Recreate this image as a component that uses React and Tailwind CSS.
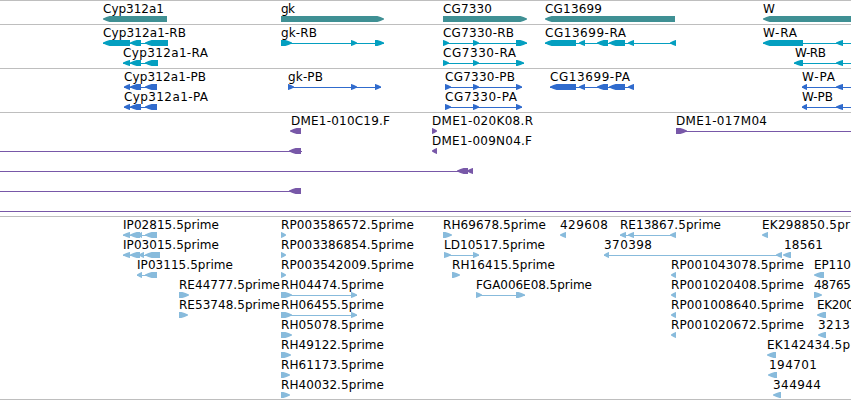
import { Fragment } from "react";

const WIDTH = 851;
const ROW_HEIGHT = 20;
const TIP = 7;

// label: [text, x, width], parts: [start, end], line: [start, end]
const tracks = [
  {
    name: "Genes",
    color: "#3f9094",
    size: "h-6",
    height: 23,
    features: [
      { row: 0, dir: "L", label: ["Cyp312a1", 103, 61], parts: [[103, 167]] },
      { row: 0, dir: "R", label: ["gk", 281, 14], parts: [[281, 384]] },
      { row: 0, dir: "R", label: ["CG7330", 443, 49], parts: [[443, 527]] },
      { row: 0, dir: "L", label: ["CG13699", 545, 57], parts: [[545, 675]] },
      { row: 0, dir: "L", label: ["W", 763, 11], parts: [[763, 860]] },
    ],
  },
  {
    name: "Transcripts",
    color: "#049fc0",
    size: "h-11",
    height: 43,
    features: [
      { row: 0, dir: "L", label: ["Cyp312a1-RB", 103, 83], parts: [[103, 130], [130, 141], [145, 168]] },
      { row: 1, dir: "L", label: ["Cyp312a1-RA", 123, 85], parts: [[123, 130], [130, 141], [145, 158]] },
      { row: 0, dir: "R", label: ["gk-RB", 281, 36], parts: [[281, 292], [351, 357], [375, 384]] },
      { row: 0, dir: "R", label: ["CG7330-RB", 443, 71], parts: [[443, 449], [473, 479], [516, 527]] },
      { row: 1, dir: "R", label: ["CG7330-RA", 443, 73], parts: [[443, 449], [473, 479], [516, 524]] },
      {
        row: 0,
        dir: "L",
        label: ["CG13699-RA", 545, 81],
        parts: [[545, 576], [579, 585], [597, 608], [609, 625], [628, 634], [670, 676]],
      },
      { row: 0, dir: "L", label: ["W-RA", 763, 34], parts: [[763, 803], [836, 843]], line: [763, 851] },
      { row: 1, dir: "L", label: ["W-RB", 795, 31], parts: [[794, 803], [836, 843]], line: [794, 851] },
    ],
  },
  {
    name: "Proteins",
    color: "#306bcd",
    size: "h-11",
    height: 43,
    features: [
      { row: 0, dir: "L", label: ["Cyp312a1-PB", 124, 82], parts: [[124, 130], [130, 141], [145, 157]] },
      { row: 1, dir: "L", label: ["Cyp312a1-PA", 124, 84], parts: [[124, 130], [130, 141], [145, 157]] },
      { row: 0, dir: "R", label: ["gk-PB", 288, 35], parts: [[288, 294], [351, 357], [375, 381]] },
      { row: 0, dir: "R", label: ["CG7330-PB", 445, 70], parts: [[445, 451], [473, 479], [516, 522]] },
      { row: 1, dir: "R", label: ["CG7330-PA", 445, 72], parts: [[445, 451], [473, 479], [516, 522]] },
      {
        row: 0,
        dir: "L",
        label: ["CG13699-PA", 550, 80],
        parts: [[550, 576], [579, 585], [597, 608], [609, 625], [628, 634]],
      },
      { row: 0, dir: "L", label: ["W-PA", 802, 33], parts: [[802, 807], [836, 843]], line: [802, 851] },
      { row: 1, dir: "L", label: ["W-PB", 802, 31], parts: [[802, 807], [836, 843]], line: [802, 851] },
    ],
  },
  {
    name: "Clones",
    color: "#7858a8",
    size: "h-[104px]",
    height: 103,
    features: [
      { row: 0, dir: "L", label: ["DME1-010C19.F", 291, 99], parts: [[290, 301]] },
      { row: 1, dir: "L", parts: [[289, 301]], line: [0, 302] },
      { row: 2, dir: "L", parts: [[457, 468], [467, 473]], line: [0, 473] },
      { row: 3, dir: "L", parts: [[289, 301]], line: [0, 301] },
      { row: 4, dir: "R", parts: [], line: [0, 851] },
      { row: 0, dir: "R", label: ["DME1-020K08.R", 432, 101], parts: [[432, 437]] },
      { row: 1, dir: "L", label: ["DME1-009N04.F", 432, 100], parts: [[432, 437]] },
      { row: 0, dir: "R", label: ["DME1-017M04", 676, 91], parts: [[676, 687]], line: [676, 851] },
    ],
  },
  {
    name: "ESTs and insertions",
    color: "#88bbdc",
    size: "h-[183px]",
    height: 182,
    features: [
      { row: 0, dir: "L", label: ["IP02815.5prime", 123, 96], parts: [[123, 130], [130, 140], [138, 142], [145, 157]] },
      { row: 1, dir: "L", label: ["IP03015.5prime", 123, 96], parts: [[123, 130], [130, 140], [139, 144], [145, 160]] },
      { row: 2, dir: "L", label: ["IP03115.5prime", 137, 96], parts: [[137, 142], [145, 157]] },
      { row: 3, dir: "R", label: ["RE44777.5prime", 179, 101], parts: [[179, 189]] },
      { row: 4, dir: "R", label: ["RE53748.5prime", 179, 101], parts: [[179, 188]] },
      { row: 0, dir: "R", label: ["RP003586572.5prime", 281, 133], parts: [[281, 286]] },
      { row: 1, dir: "R", label: ["RP003386854.5prime", 281, 133], parts: [[281, 286]] },
      { row: 2, dir: "R", label: ["RP003542009.5prime", 281, 133], parts: [[281, 286]] },
      { row: 3, dir: "R", label: ["RH04474.5prime", 281, 103], parts: [[281, 292], [351, 357]] },
      { row: 4, dir: "R", label: ["RH06455.5prime", 281, 103], parts: [[281, 292], [351, 357]] },
      { row: 5, dir: "R", label: ["RH05078.5prime", 281, 103], parts: [[281, 292]] },
      { row: 6, dir: "R", label: ["RH49122.5prime", 281, 103], parts: [[281, 291]] },
      { row: 7, dir: "R", label: ["RH61173.5prime", 281, 103], parts: [[281, 290]] },
      { row: 8, dir: "R", label: ["RH40032.5prime", 281, 103], parts: [[281, 290]] },
      { row: 0, dir: "R", label: ["RH69678.5prime", 443, 103], parts: [[443, 452]] },
      { row: 1, dir: "R", label: ["LD10517.5prime", 444, 101], parts: [[444, 451], [473, 479]] },
      { row: 2, dir: "R", label: ["RH16415.5prime", 452, 103], parts: [[452, 460]] },
      { row: 3, dir: "R", label: ["FGA006E08.5prime", 476, 116], parts: [[476, 482], [516, 525]] },
      { row: 0, dir: "L", label: ["429608", 560, 48], parts: [[560, 566]] },
      { row: 0, dir: "L", label: ["RE13867.5prime", 620, 101], parts: [[620, 626], [628, 634], [670, 676]] },
      { row: 1, dir: "L", label: ["370398", 604, 48], parts: [[604, 609], [776, 782]] },
      { row: 1, dir: "L", label: ["18561", 784, 39], parts: [[783, 791]] },
      { row: 2, dir: "L", label: ["RP001043078.5prime", 671, 133], parts: [[671, 676]] },
      { row: 3, dir: "L", label: ["RP001020408.5prime", 671, 133], parts: [[671, 676]] },
      { row: 4, dir: "L", label: ["RP001008640.5prime", 671, 133], parts: [[671, 676]] },
      { row: 5, dir: "L", label: ["RP001020672.5prime", 671, 133], parts: [[671, 676]] },
      { row: 0, dir: "L", label: ["EK298850.5pr", 762, 88], parts: [[762, 768]] },
      { row: 2, dir: "L", label: ["EP110", 814, 37], parts: [[814, 824]] },
      { row: 3, dir: "R", label: ["48765", 814, 37], parts: [[814, 822]] },
      { row: 4, dir: "L", label: ["EK200", 817, 37], parts: [[817, 826]] },
      { row: 5, dir: "L", label: ["3213", 818, 32], parts: [[818, 826]] },
      { row: 6, dir: "L", label: ["EK142434.5p", 767, 83], parts: [[767, 776]] },
      { row: 7, dir: "L", label: ["194701", 769, 48], parts: [[768, 777]] },
      { row: 8, dir: "L", label: ["344944", 773, 48], parts: [[773, 781]] },
    ],
  },
];

// block with a slightly rounded, pointed head
const arrowPoints = (start, end, dir, top) => {
  const tip = Math.min(TIP, end - start);
  const [head, tail, step] = dir === "R" ? [end, start, -1] : [start, end, 1];
  const mid = top + 3;
  const shoulder = head + step * tip * 0.95;
  const cheek = head + step * tip * 0.5;
  return [
    [tail, top],
    [shoulder, top],
    [cheek, mid - 2],
    [head, mid - 0.4],
    [head, mid + 0.4],
    [cheek, mid + 2],
    [shoulder, top + 6],
    [tail, top + 6],
  ].join(" ");
};

function Feature({ feature, color }) {
  const { row, dir, label, parts, line } = feature;
  // the track's 1px border takes up the first pixel
  const top = row * ROW_HEIGHT + 15;
  const [from, to] = line || [parts[0][0], parts[parts.length - 1][1]];

  return (
    <Fragment>
      {(line || parts.length > 1) && (
        <rect x={from} y={top + 3} width={to - from} height={1} fill={color} />
      )}
      {parts.map(([start, end]) => (
        <polygon
          key={start}
          points={arrowPoints(start, end, dir, top)}
          fill={color}
        />
      ))}
      {label && (
        <text
          x={label[1]}
          y={top - 3}
          textLength={label[2]}
          className="fill-black text-[12px]"
        >
          {label[0]}
        </text>
      )}
    </Fragment>
  );
}

function Track({ track }) {
  return (
    <section
      aria-label={track.name}
      className={`w-full shrink-0 overflow-hidden border-t border-[#bebebe] ${track.size}`}
    >
      <svg
        width={WIDTH}
        height={track.height}
        viewBox={`0 0 ${WIDTH} ${track.height}`}
        className="block"
      >
        {track.features.map((feature, index) => (
          <Feature key={index} feature={feature} color={track.color} />
        ))}
      </svg>
    </section>
  );
}

export default function App() {
  return (
    <main className="flex flex-col w-[851px] h-[400px] overflow-hidden bg-white font-['DejaVu_Sans',sans-serif]">
      {tracks.map((track) => (
        <Track key={track.name} track={track} />
      ))}
      <div className="h-px w-full bg-[#bebebe]" />
    </main>
  );
}
